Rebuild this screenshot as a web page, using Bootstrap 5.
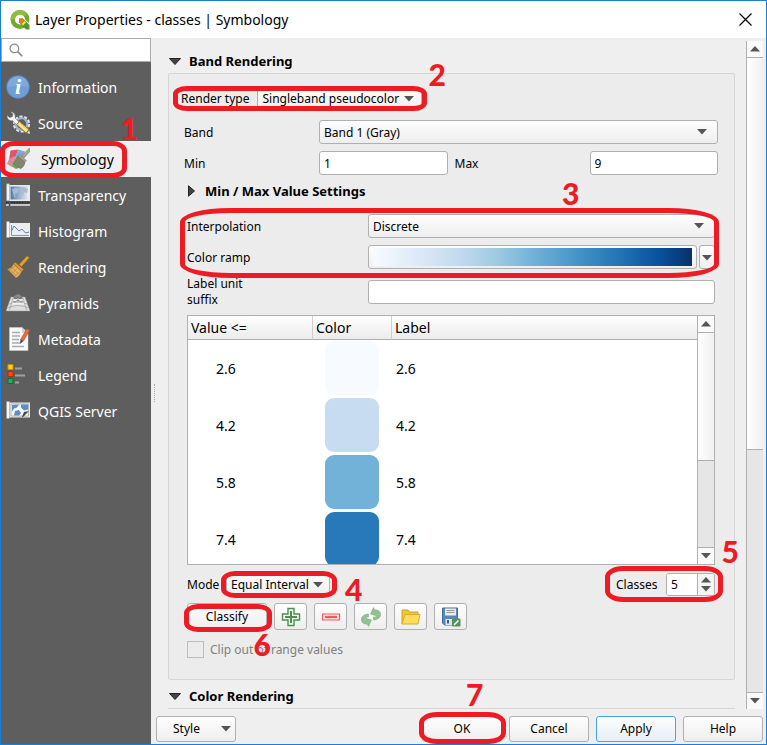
<!DOCTYPE html>
<html lang="en">
<head>
<meta charset="utf-8">
<meta name="viewport" content="width=device-width, initial-scale=1">
<title>Layer Properties - classes | Symbology</title>
<link href="https://cdn.jsdelivr.net/npm/bootstrap@5.3.0/dist/css/bootstrap.min.css" rel="stylesheet">
<style>
  :root { --edge: #b0b0b0; --ink: #ed1c24; --ui: "Noto Sans", "Open Sans", sans-serif; }
  body { font-family: var(--ui); font-size: 12px; line-height: 15px; color: #000; background: #efefef; }
  .dialog { min-height: 100vh; border: 1px solid #1a7fd4; }
  .titlebar { height: 37px; padding: 0 14px 0 8px; background: #fff; font-size: 14px; }
  .btn-close-x { border: 0; background: none; padding: 0; line-height: 0; }

  .side { width: 150px; background: #5e5e5e; }
  .search-box { height: 24px; margin-bottom: 7px; border: 1px solid #ababab; background: #fff; padding: 0 7px; }
  .search-box input { border: 0; outline: 0; min-width: 0; padding: 0; background: none; }
  .side-link { height: 36px; padding-left: 5px; gap: 8px; color: #fff; font-size: 14px; text-decoration: none; }
  .side-link.on { background: #efefef; color: #000; gap: 11px; }
  .side-link svg { width: 24px; height: 24px; flex: none; }

  .pane { padding: 3px 3px 2px 0; }
  .pane-body { padding: 10px 11px 0 13px; }
  .grip { width: 4px; flex: none; }
  .grip i { position: absolute; top: 343px; left: 3px; height: 18px; border-left: 1px dotted #a8a8a8; }
  .sec { height: 20px; gap: 8px; padding-left: 1px; font-weight: 700; font-size: 13px; background: none; border: 0; }
  .sec-next { margin-top: 6px; }
  .group { margin-top: 2px; border: 1px solid #d6d6d6; border-radius: 2px; background: #ececec; padding: 12px 0 21px 4px; }
  .rule { border-top: 1px solid #d6d6d6; margin: 2px 0 0; }
  .blk-a { padding: 9px 16px 0 11px; }
  .blk-b { padding: 13px 19px 0 14px; }
  .row-gap { margin-top: 7px; }
  .lab-a { width: 135px; }
  .lab-b { width: 181px; }
  .lab-max { width: 142px; padding-left: 7px; }
  .two-line { line-height: 16px; }

  .ctl { height: 24px; border: 1px solid var(--edge); border-radius: 3px; background-color: #fff; padding: 0 4px; font-size: 12px; line-height: 15px; color: #000; min-width: 0; }
  .face { background-image: linear-gradient(#fefefe, #eeeeee); }
  select.ctl { appearance: none; background-color: #f6f6f6;
    background-image: url("data:image/svg+xml,%3Csvg xmlns='http://www.w3.org/2000/svg' width='10' height='6'%3E%3Cpath d='M0 0h10L5 5.5z' fill='%23555'/%3E%3C/svg%3E"), linear-gradient(#fefefe, #eeeeee);
    background-repeat: no-repeat; background-position: right 10px center, 0 0; }
  .face { border: 1px solid var(--edge); border-radius: 3px; background-color: #f6f6f6; color: #000; padding: 0; font-size: 12px; line-height: 15px; }
  .render-bar { height: 25px; padding: 0 5px 0 8px; gap: 8px; }
  .render-bar select.ctl { width: 165px; background-position: right 7px center, 0 0; }
  .ramp { height: 24px; padding: 2px 4px; }
  .ramp span { display: block; height: 18px; background: linear-gradient(90deg, #f7fbff 0%, #deebf7 13%, #c6dbef 26%, #9ecae1 39%, #6baed6 52%, #4292c6 65%, #2171b5 78%, #08519c 90%, #08306b 100%); }
  .ramp-drop { width: 16px; height: 24px; margin-left: 2px; }

  .grid-box { height: 250px; margin-top: 7px; border: 1px solid var(--edge); background: #fff; overflow: hidden; }
  .classes-table { width: 100%; table-layout: fixed; border-collapse: separate; border-spacing: 0; font-size: 14px; }
  .classes-table th { height: 24px; padding: 0 3px; font-weight: 400; border-bottom: 1px solid var(--edge); border-right: 1px solid #cfcfcf; background: linear-gradient(#fefefe, #ececec); }
  .classes-table th:last-child { border-right: 0; }
  .classes-table td { height: 57px; padding: 0 4px 1px; }
  .classes-table td:first-child { padding-left: 28px; }
  .col-value { width: 125px; }
  .col-color { width: 79px; }
  .swatch { width: 54px; height: 54px; border-radius: 9px; margin-left: 8px; }

  .bar-y { width: 17px; border-left: 1px solid var(--edge); background: #e6e6e6; }
  .bar-y button { height: 17px; border: 0; padding: 0; background: #fafafa; line-height: 0; }
  .bar-y .up { border-bottom: 1px solid var(--edge); }
  .bar-y .down { border-top: 1px solid var(--edge); }
  .thumb { background: linear-gradient(90deg, #fff, #f0f0f0); border-bottom: 1px solid var(--edge); }

  .lab-mode { width: 39px; }
  .lab-classes { width: 50px; }
  .spin { width: 49px; height: 23px; border: 1px solid var(--edge); border-radius: 3px; background: #fff; overflow: hidden; }
  .spin input { border: 0; outline: 0; padding: 0 4px; min-width: 0; appearance: textfield; -moz-appearance: textfield; }
  .spin input::-webkit-inner-spin-button { display: none; }
  .spin-btns { width: 17px; border-left: 1px solid var(--edge); background: #f4f4f4; gap: 3px; }
  .spin-btns button { border: 0; padding: 0; background: none; line-height: 0; }
  .mode select.ctl { width: 104px; height: 23px; background-position: right 6px center, 0 0; }
  .tools { gap: 7px; margin-top: 7px; }
  .tools .classify { width: 80px; height: 27px; }
  .tool { width: 33px; height: 27px; line-height: 0; }
  .clip { margin-top: 10px; height: 18px; gap: 6px; color: #808080; }
  .clip input { width: 17px; height: 17px; margin: 0; appearance: none; border: 1px solid #bdbdbd; background: #ececec; }

  .footer-bar { height: 33px; padding: 2px 3px 0 5px; gap: 7px; }
  .footer-bar .face { width: 80px; height: 26px; }
  .footer-bar .apply { border-color: #47a4ee; background-image: linear-gradient(#fefefe, #e6eef6); }

  /* red annotation marks laid over the controls */
  .ring { position: absolute; border: 5px solid var(--ink); pointer-events: none; z-index: 2; }
  .num { position: absolute; color: var(--ink); font: 900 30px/30px Lato, sans-serif; pointer-events: none; z-index: 3; }
  .r1 { inset: 0 24px -1px -1px; border-radius: 14px / 10px; }
  .n1 { right: 13px; top: -28px; }
  .r2 { inset: 0; border-radius: 14px / 8px; }
  .n2 { left: 100%; top: -27px; margin-left: 1px; }
  .r3 { inset: -6px -4px -9px -7px; border-radius: 50px / 14px; }
  .n3 { left: 71%; top: -36px; }
  .r4 { inset: -2px -7px -2px -5px; border-radius: 14px / 9px; }
  .n4 { left: 100%; top: 1px; margin-left: 15px; }
  .r5 { inset: -7px -8px -6px -11px; border-radius: 18px / 11px; }
  .n5 { right: -24px; top: -37px; }
  .r6 { inset: 1px -5px -2px -3px; border-radius: 14px / 9px; }
  .n6 { right: -4px; top: 26px; }
  .r7 { inset: -4px -4px -2px -3px; border-radius: 18px / 11px; }
  .n7 { left: 44px; top: -37px; }
</style>
</head>
<body>
<svg class="d-none" aria-hidden="true">
  <symbol id="tri-down" viewBox="0 0 10 6"><path d="M0 0h10L5 5.500z" fill="#555"/></symbol>
  <symbol id="tri-up" viewBox="0 0 10 6"><path d="M0 5.500h10L5 0z" fill="#555"/></symbol>
</svg>
<div class="dialog d-flex flex-column">
  <header class="titlebar d-flex align-items-center">
    <svg width="22" height="22" viewBox="0 0 22 22" aria-hidden="true">
      <circle cx="11" cy="10.500" r="7.300" fill="none" stroke="#74a832" stroke-width="4.400"/>
      <path d="M3.700 10.500a7.300 7.300 0 0 1 13-4.500" fill="none" stroke="#8fbe3f" stroke-width="4.400"/>
      <path d="M14 12.500l7 7" stroke="#fff" stroke-width="6"/>
      <path d="M10 9.500h4l6.500 6.500v4.500h-3.500l-7-7z" fill="#589632"/>
      <path d="M10 9.500h3.500l2 2-3.500 3.500-2-2z" fill="#ee7913"/>
      <path d="M12.500 15l3-3 1.500 1.500-3 3z" fill="#f0e64a"/>
    </svg>
    <span class="ms-1 flex-grow-1">Layer Properties - classes | Symbology</span>
    <button class="btn-close-x" aria-label="Close"><svg width="13" height="13" viewBox="0 0 13 13"><path d="M.5.5l12 12M12.500.5l-12 12" stroke="#000" stroke-width="1.200"/></svg></button>
  </header>

  <div class="d-flex flex-grow-1">
    <nav class="side flex-shrink-0" aria-label="Sections">
      <div class="search-box d-flex align-items-center">
        <svg class="flex-shrink-0" width="14" height="14" viewBox="0 0 13 13" fill="none" stroke="#8c8c8c" aria-hidden="true"><circle cx="5" cy="5" r="4" stroke-width="1.200"/><path d="M8 8l4.300 4.300" stroke-width="1.600"/></svg>
        <input class="flex-fill" type="text" aria-label="Search">
      </div>
      <a class="side-link d-flex align-items-center" href="#information">
        <svg viewBox="0 0 24 24"><circle cx="12" cy="12" r="11.800" fill="#5588c4"/><circle cx="12" cy="12" r="10.800" fill="#6f9fd5"/><path d="M1.500 12a10.500 10.500 0 0 1 21 0q-10-3-21 0z" fill="#7eabdc"/><text x="12" y="19" text-anchor="middle" font-family="Liberation Serif, serif" font-size="22" font-weight="700" font-style="italic" fill="#fff">i</text></svg>
        <span>Information</span></a>
      <a class="side-link d-flex align-items-center" href="#source">
        <svg viewBox="0 0 24 24"><circle cx="15.500" cy="13" r="7.300" fill="none" stroke="#e4e9ee" stroke-width="2.600" stroke-dasharray="3 1.600"/><circle cx="15.500" cy="13" r="5.800" fill="#5e5e5e" stroke="#9db4d0" stroke-width="2.200"/><path d="M1 4.500c0 3.500 2.500 5.700 5.500 5l5.500 5.500 2.500-2.500L9 7c.8-3.200-1-6-4.300-6.300L7 3.200 6.300 5.800 3.700 6.500z" fill="#f6f6f6" stroke="#777" stroke-width=".5"/><path d="M10.500 13.500l3-3.200L23 18.500l-3 3.700z" fill="#f0d070" stroke="#7c651c" stroke-width=".8"/><path d="M13 13.200l8 7" stroke="#fff1ae" stroke-width="1.200"/><path d="M21 22l2.300-2.800.7 3.800z" fill="#ddd"/></svg>
        <span>Source</span></a>
      <a class="side-link on position-relative d-flex align-items-center" href="#symbology" aria-current="page">
        <svg viewBox="0 0 24 24"><path d="M4.500 3.500L12 2.500l-2 7-7 4z" fill="#e0526e"/><path d="M3 12l6-3 1 6-4 5-5-3z" fill="#d98a98"/><path d="M12 2.500l7 2-4 8-6-2z" fill="#7aa9dc"/><path d="M6 19.500l4-9.500 7 3-2 7-5 2z" fill="#62b04a"/><path d="M23.500 1l1.500 2-7 8-2.300-2z" fill="#aaa893" stroke="#77776a" stroke-width=".6"/><path d="M13 7.500l7.500 6-1.700 2-7-6z" fill="#a3a18f" stroke="#6e6e60" stroke-width=".4"/><path d="M12 9.500l7 6c-.6 3-2 5-4.500 6.200L7 16.500c2.800-1.500 4-4 5-7z" fill="#858371" stroke="#66665a" stroke-width=".5"/></svg>
        <span>Symbology</span>
        <span class="ring r1"></span><span class="num n1">1</span></a>
      <a class="side-link d-flex align-items-center" href="#transparency">
        <svg viewBox="0 0 24 24"><defs><linearGradient id="fade"><stop stop-color="#5579ad"/><stop offset="1" stop-color="#edf1f6"/></linearGradient></defs><path d="M3 2h21v16H3z" fill="#e9eaeb"/><path d="M4.500 3.500H23v13H4.500z" fill="url(#fade)"/><path d="M6 6l4-1 3 2-2 3-2 1 1 4-2-2zM14 6l4-2 4 2-1 4-3-1-1 4-3-5z" fill="#a9bcd5"/><path d="M.5.800h3v17h-3z" fill="#f3f3f3" stroke="#999" stroke-width=".5"/><path d="M0 19.500h24" stroke="#222" stroke-width="2" stroke-dasharray="1 .6"/><path d="M0 22h24" stroke="#e8e8e8" stroke-width="1.500"/><path d="M3.500 18v5" stroke="#2756a4" stroke-width="1.500"/></svg>
        <span>Transparency</span></a>
      <a class="side-link d-flex align-items-center" href="#histogram">
        <svg viewBox="0 0 24 24"><path d="M3 4h21v14H3z" fill="#eceded"/><path d="M.5 2.500h3v16h-3z" fill="#f7f7f7" stroke="#999" stroke-width=".5"/><path d="M5.500 6v10.500H23" fill="none" stroke="#8f9499"/><path d="M5.500 12l2.500-5 5 5 3-2 3.500 4 3.500-1" fill="none" stroke="#5c80b5" stroke-width="1"/></svg>
        <span>Histogram</span></a>
      <a class="side-link d-flex align-items-center" href="#rendering">
        <svg viewBox="0 0 24 24"><path d="M21 .8l2.500 2-8 9-2.500-2.300z" fill="#e0a02e" stroke="#8d5e11" stroke-width=".6"/><path d="M9 7l9 7.500-2.500 2L7.500 9z" fill="#d8982d" stroke="#8d5e11" stroke-width=".6"/><path d="M7.500 9l8 7.500c-1 3-3 5-5.500 6.500L1.500 14c3-.5 5-2 6-5z" fill="#e5b566" stroke="#a87426" stroke-width=".6"/><path d="M4 14.500l6.500 6.500M6 12.500l7 7M3 15.500l6-4.500M6 18.500l5-5M9 21l5-4.500" stroke="#b98436" stroke-width=".7"/></svg>
        <span>Rendering</span></a>
      <a class="side-link d-flex align-items-center" href="#pyramids">
        <svg viewBox="0 0 24 24"><path d="M5 6h14l5 14H0z" fill="#dedede" stroke="#999" stroke-width=".5"/><path d="M9 4.500l3-1.500 3 1.500 2 3-5 2-5-2z" fill="#888"/><path d="M5 9.500l7-2 7 2 2 4H3z" fill="#f2f2f2"/><path d="M3 13q9-4 18 0M1.500 17q10-5 21 0M7 7L3.500 19M17 7l3.500 12M12 8v4" fill="none" stroke="#aaa" stroke-width=".9"/><path d="M8 6l2 2 2-2 2 2 2-2M7 10l2 1 3-2 3 2 2-1" fill="none" stroke="#666" stroke-width=".8"/></svg>
        <span>Pyramids</span></a>
      <a class="side-link d-flex align-items-center" href="#metadata">
        <svg viewBox="0 0 24 24"><path d="M3.500.5H16L22 6v17.500H3.500z" fill="#fafafa" stroke="#d0d0d0" stroke-width=".5"/><path d="M16 .5V6h6z" fill="#d2d2d2"/><path d="M6 5.500h8M6 9h8M6 12.500h7M6 16h8M6 19.500h12" stroke="#aaa" stroke-width="1.300"/><path d="M21 1.500l3 1.500-6.500 11-3-1.500z" fill="#e2703a" stroke="#a34314" stroke-width=".5"/><path d="M14.500 12.500l3 1.500-3.500 3z" fill="#444"/></svg>
        <span>Metadata</span></a>
      <a class="side-link d-flex align-items-center" href="#legend">
        <svg viewBox="0 0 24 24"><path d="M2 1.500h5v5H2z" fill="#ffd500" stroke="#c98e00"/><path d="M2 8.500h5v5H2z" fill="#ff4800" stroke="#a83200"/><path d="M2 15.500h5v5H2z" fill="#1fae5c" stroke="#0c6d36"/><path d="M9 5.500h7M9 12.500h10M9 19.500h4" stroke="#a0a0a0" stroke-width="2"/></svg>
        <span>Legend</span></a>
      <a class="side-link d-flex align-items-center" href="#server">
        <svg viewBox="0 0 24 24"><path d="M3 3.500h21v15H3z" fill="#ececec"/><path d="M5 5h17.500v12H5z" fill="#f8f8f8" stroke="#8c8c8c" stroke-width=".6"/><path d="M6 6l7-.5-2 3-3 1-2 3zM15 5.500h7v5l-4 1-3-3zM9 12l4-1 2 3-2 2.500H8z" fill="#5b8dc9"/><path d="M.5 2.500h3v17h-3z" fill="#f7f7f7" stroke="#999" stroke-width=".5"/><path d="M23 12l-6 6h-1l2-5z" fill="#444"/></svg>
        <span>QGIS Server</span></a>
    </nav>

    <div class="flex-grow-1 d-flex flex-column">
      <main class="pane d-flex flex-grow-1">
        <div class="grip position-relative"><i></i></div>
        <div class="pane-body flex-grow-1">
          <button class="sec d-flex align-items-center" aria-expanded="true"><svg width="12" height="7" viewBox="0 0 12 7" aria-hidden="true"><path d="M.5.5h11L6 6.500z" fill="#444" stroke="#222"/></svg>Band Rendering</button>
          <section class="group">
            <div class="render-bar position-relative d-inline-flex align-items-center">
              <label for="rtype">Render type</label>
              <select id="rtype" class="ctl"><option>Singleband pseudocolor</option></select>
              <span class="ring r2"></span><span class="num n2">2</span>
            </div>
            <div class="blk-a">
              <div class="d-flex align-items-center">
                <label class="lab-a flex-shrink-0" for="band">Band</label>
                <select id="band" class="ctl flex-fill"><option>Band 1 (Gray)</option></select>
              </div>
              <div class="row-gap d-flex align-items-center">
                <label class="lab-a flex-shrink-0" for="vmin">Min</label>
                <input id="vmin" class="ctl w-100" type="text" value="1">
                <label class="lab-max flex-shrink-0" for="vmax">Max</label>
                <input id="vmax" class="ctl w-100" type="text" value="9">
              </div>
              <button class="sec sec-next d-flex align-items-center" aria-expanded="false"><svg width="12" height="12" viewBox="0 0 12 12" aria-hidden="true"><path d="M3.500.8v10.400L9.500 6z" fill="#444" stroke="#222"/></svg>Min / Max Value Settings</button>
            </div>
            <div class="blk-b">
              <div class="position-relative">
                <div class="d-flex align-items-center">
                  <label class="lab-b flex-shrink-0" for="interp">Interpolation</label>
                  <select id="interp" class="ctl flex-fill"><option>Discrete</option></select>
                </div>
                <div class="row-gap d-flex align-items-center">
                  <label class="lab-b flex-shrink-0" for="ramp">Color ramp</label>
                  <button id="ramp" class="face ramp flex-fill" aria-label="Color ramp"><span></span></button>
                  <button class="face ramp-drop" aria-label="Choose color ramp"><svg width="10" height="6"><use href="#tri-down"/></svg></button>
                </div>
                <span class="ring r3"></span><span class="num n3">3</span>
              </div>
              <div class="row-gap d-flex align-items-center">
                <label class="lab-b two-line flex-shrink-0" for="suffix">Label unit<br>suffix</label>
                <input id="suffix" class="ctl flex-fill" type="text">
              </div>
              <div class="grid-box d-flex">
                <div class="flex-grow-1">
                  <table class="classes-table">
                    <colgroup><col class="col-value"><col class="col-color"><col></colgroup>
                    <thead><tr><th>Value &lt;=</th><th>Color</th><th>Label</th></tr></thead>
                    <tbody>
                      <tr><td>2.6</td><td><div class="swatch" style="background:#f7fbff"></div></td><td>2.6</td></tr>
                      <tr><td>4.2</td><td><div class="swatch" style="background:#c7dcf0"></div></td><td>4.2</td></tr>
                      <tr><td>5.8</td><td><div class="swatch" style="background:#72b2d8"></div></td><td>5.8</td></tr>
                      <tr><td>7.4</td><td><div class="swatch" style="background:#2879b9"></div></td><td>7.4</td></tr>
                    </tbody>
                  </table>
                </div>
                <div class="bar-y d-flex flex-column flex-shrink-0">
                  <button class="up" aria-label="Scroll up"><svg width="10" height="6"><use href="#tri-up"/></svg></button>
                  <div class="thumb" style="flex:128"></div><div style="flex:86"></div>
                  <button class="down" aria-label="Scroll down"><svg width="10" height="6"><use href="#tri-down"/></svg></button>
                </div>
              </div>
              <div class="mode d-flex align-items-center justify-content-between mt-2">
                <div class="d-flex align-items-center">
                  <label class="lab-mode" for="mode">Mode</label>
                  <div class="position-relative d-flex">
                    <select id="mode" class="ctl"><option>Equal Interval</option></select>
                    <span class="ring r4"></span><span class="num n4">4</span>
                  </div>
                </div>
                <div class="position-relative d-flex align-items-center">
                  <label class="lab-classes" for="classes">Classes</label>
                  <div class="spin d-flex">
                    <input id="classes" class="flex-fill w-100" type="number" value="5">
                    <div class="spin-btns d-flex flex-column justify-content-center align-items-center flex-shrink-0">
                      <button aria-label="More"><svg width="10" height="6"><use href="#tri-up"/></svg></button>
                      <button aria-label="Fewer"><svg width="10" height="6"><use href="#tri-down"/></svg></button>
                    </div>
                  </div>
                  <span class="ring r5"></span><span class="num n5">5</span>
                </div>
              </div>
              <div class="tools d-flex">
                <div class="position-relative"><button class="face classify">Classify</button><span class="ring r6"></span><span class="num n6">6</span></div>
                <button class="face tool" aria-label="Add"><svg width="20" height="20" viewBox="0 0 20 20"><path d="M7 1.500h6V7h5.500v6H13v5.500H7V13H1.500V7H7z" fill="#f1f8f1" stroke="#4c8f50" stroke-width="1.400"/><path d="M10 4v12M4 10h12" stroke="#4c8f50" stroke-width="2"/></svg></button>
                <button class="face tool" aria-label="Remove"><svg width="20" height="20" viewBox="0 0 20 20"><path d="M1.500 7h17v6h-17z" fill="#fde9e9" stroke="#ee5a5a" stroke-width="1.200"/><path d="M4 10h12" stroke="#ee5a5a" stroke-width="2.200"/></svg></button>
                <button class="face tool" aria-label="Refresh"><svg width="20" height="20" viewBox="0 0 20 20" fill="#8fc191" stroke="#74ad77" stroke-width=".5"><path d="M7.500 7C3.500 7 .3 9.500.3 12.500c0 3 2.500 5 5.700 4.500l1.500 2.500 3-6.500-6.500-2 1 2.300c-1 .2-1.700-.3-1.500-1.300.3-1.500 2-2.300 4-2z"/><path d="M12.500 13c4 0 7.200-2.500 7.200-5.500 0-3-2.500-5-5.700-4.500L12.500.5l-3 6.500 6.500 2-1-2.300c1-.2 1.700.3 1.500 1.300-.3 1.500-2 2.300-4 2z"/></svg></button>
                <button class="face tool" aria-label="Open"><svg width="20" height="20" viewBox="0 0 20 20"><path d="M1 17V3h6l1.500 2H17v3" fill="#f3c53d" stroke="#d3a21f"/><path d="M1 17l3-9.500h15L17 17z" fill="#ffdc5c" stroke="#d9ab2b"/></svg></button>
                <button class="face tool" aria-label="Save"><svg width="20" height="20" viewBox="0 0 20 20"><path d="M1.500 1h15v17h-13l-2-2z" fill="#5b86b8" stroke="#456d9c"/><path d="M4 1.500h11v7H4z" fill="#ececec"/><path d="M5.500 3.500h8M5.500 5.500h8" stroke="#999"/><path d="M4.500 12h8v6h-8z" fill="#dce3ea"/><path d="M6 13h2v3.500H6z" fill="#3e5f87"/><rect x="11" y="11.500" width="8.500" height="8" rx="1" fill="#4f9355"/><path d="M13 18l4.500-4.500" stroke="#fff" stroke-width="1.600"/></svg></button>
              </div>
              <div class="clip d-flex align-items-center"><input id="clip" type="checkbox" disabled><label for="clip">Clip out of range values</label></div>
            </div>
          </section>
          <button class="sec sec-next d-flex align-items-center" aria-expanded="true"><svg width="12" height="7" viewBox="0 0 12 7" aria-hidden="true"><path d="M.5.5h11L6 6.500z" fill="#444" stroke="#222"/></svg>Color Rendering</button>
          <div class="rule"></div>
        </div>
        <div class="bar-y d-flex flex-column flex-shrink-0">
          <button class="up" aria-label="Scroll up"><svg width="10" height="6"><use href="#tri-up"/></svg></button>
          <div class="thumb" style="flex:392"></div><div style="flex:242"></div>
          <button class="down" aria-label="Scroll down"><svg width="10" height="6"><use href="#tri-down"/></svg></button>
        </div>
      </main>
      <footer class="footer-bar d-flex align-items-center">
        <button class="face d-flex align-items-center justify-content-between ps-3 pe-1 me-auto">Style <svg width="10" height="6"><use href="#tri-down"/></svg></button>
        <div class="position-relative"><button class="face">OK</button><span class="ring r7"></span><span class="num n7">7</span></div>
        <button class="face">Cancel</button>
        <button class="face apply">Apply</button>
        <button class="face">Help</button>
      </footer>
    </div>
  </div>
</div>
<script src="https://cdn.jsdelivr.net/npm/bootstrap@5.3.0/dist/js/bootstrap.bundle.min.js"></script>
</body>
</html>
